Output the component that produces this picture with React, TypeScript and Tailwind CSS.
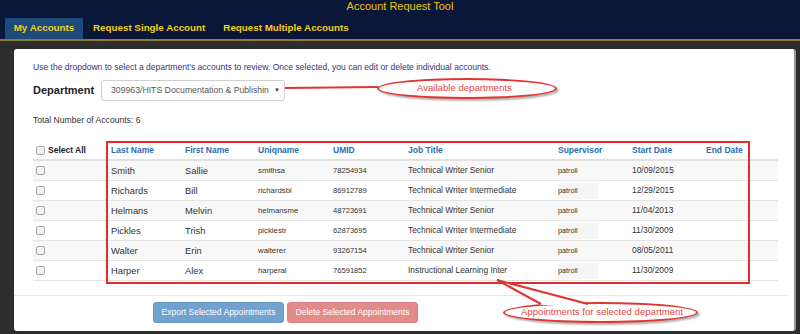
import React from 'react'

const rows = [
  { last: 'Smith', first: 'Sallie', uniq: 'smithsa', umid: '78254934', job: 'Technical Writer Senior', start: '10/09/2015' },
  { last: 'Richards', first: 'Bill', uniq: 'richardsbi', umid: '86912789', job: 'Technical Writer Intermediate', start: '12/29/2015' },
  { last: 'Helmans', first: 'Melvin', uniq: 'helmansme', umid: '48723691', job: 'Technical Writer Senior', start: '11/04/2013' },
  { last: 'Pickles', first: 'Trish', uniq: 'picklestr', umid: '62873695', job: 'Technical Writer Intermediate', start: '11/30/2009' },
  { last: 'Walter', first: 'Erin', uniq: 'walterer', umid: '93267154', job: 'Technical Writer Senior', start: '08/05/2011' },
  { last: 'Harper', first: 'Alex', uniq: 'harperal', umid: '76591852', job: 'Instructional Learning Inter', start: '11/30/2009' },
]

const cols = 'grid grid-cols-[73px_74px_73px_75px_75px_150px_74px_74px_77px]'

function Box() {
  return <span className="inline-block w-[9px] h-[9px] rounded-[2px] border border-[#a9a9a9] bg-[#f3f3f3]" />
}

export default function App() {
  return (
    <div className="relative w-[800px] h-[334px] overflow-hidden bg-[#2d2d2d] font-['Liberation_Sans',Arial,sans-serif]">
      {/* header */}
      <div className="bg-[#0b1739] h-[39px] flex flex-col">
        <div className="h-[18px] text-center text-[11px] leading-[13px] text-[#e9c800]">Account Request Tool</div>
        <div className="flex h-[21px] pl-[5px] text-[9.8px] font-bold text-[#f2cf1a] whitespace-nowrap">
          <div className="bg-[#1d4b7c] w-[78px] flex items-center justify-center">My Accounts</div>
          <div className="px-[10px] flex items-center">Request Single Account</div>
          <div className="px-[8px] flex items-center">Request Multiple Accounts</div>
        </div>
      </div>
      <div className="h-[2px] bg-[#8c7b3c]" />

      {/* panel */}
      <div className="ml-[14px] mt-[8px] w-[782px] h-[282px] bg-white rounded-[3px] border-r-2 border-[#9a9a9a]">
        <div className="pl-[19px] pt-[12px]">
          <div className="h-[12px] leading-[12px] text-[8.55px] text-[#34347f]">
            Use the dropdown to select a department's accounts to review. Once selected, you can edit or delete individual accounts.
          </div>
          <div className="mt-[7px] h-[21px] flex items-center">
            <span className="w-[68px] text-[11px] font-bold text-[#222]">Department</span>
            <div className="w-[184px] h-[21px] border border-[#cfcfcf] rounded-[3px] flex items-center pl-[9px] pr-[4px] text-[8.7px] text-[#555]">
              <span className="flex-1">309963/HITS Documentation &amp; Publishin</span>
              <span className="text-[6px] text-[#333]">▼</span>
            </div>
          </div>
          <div className="mt-[13px] h-[12px] leading-[12px] text-[8.6px] text-[#333]">Total Number of Accounts: 6</div>

          {/* table */}
          <div className="mt-[16px] w-[745px]">
            <div className={`${cols} h-[19px] items-center border-b-2 border-[#e2e2e2] text-[8.5px] font-bold text-[#2d6cb0]`}>
              <div className="pl-[3px] flex items-center gap-[3px] text-[#222]"><Box />Select All</div>
              <div className="pl-[5px]">Last Name</div>
              <div className="pl-[5px]">First Name</div>
              <div className="pl-[5px]">Uniqname</div>
              <div className="pl-[5px]">UMID</div>
              <div className="pl-[5px]">Job Title</div>
              <div className="pl-[5px]">Supervisor</div>
              <div className="pl-[5px]">Start Date</div>
              <div className="pl-[5px]">End Date</div>
            </div>
            {rows.map((r, i) => (
              <div
                key={r.uniq}
                className={`${cols} h-[20px] items-center border-b border-[#e4e4e4] text-[#333] ${i % 2 === 0 ? 'bg-[#f8f8f8]' : 'bg-white'}`}
              >
                <div className="pl-[3px] flex items-center"><Box /></div>
                <div className="pl-[5px] text-[9.4px] pt-[2px]">{r.last}</div>
                <div className="pl-[5px] text-[9.4px] pt-[2px]">{r.first}</div>
                <div className="pl-[5px] text-[7.8px]">{r.uniq}</div>
                <div className="pl-[5px] text-[7.6px]">{r.umid}</div>
                <div className="pl-[5px] text-[8.4px]">{r.job}</div>
                <div className="pl-[5px] text-[7.2px]">
                  <span className={`inline-block w-[40px] leading-[16px] ${i % 2 === 0 ? 'bg-[#f8f8f8]' : 'bg-[#f5f5f5]'}`}>patroll</span>
                </div>
                <div className="pl-[5px] text-[8.4px]">{r.start}</div>
                <div className="pl-[5px]" />
              </div>
            ))}
          </div>
        </div>

        {/* footer */}
        <div className="mt-[14px] mr-[6px] border-t border-[#e6e6e6] pt-[6px] pl-[139px] flex gap-[3px]">
          <button className="w-[131px] h-[21px] rounded-[3px] bg-[#72a2cf] border border-[#6a98c4] text-white text-[8.5px]">
            Export Selected Appointments
          </button>
          <button className="w-[131px] h-[21px] rounded-[3px] bg-[#e28c8a] border border-[#d98381] text-white text-[8.5px]">
            Delete Selected Appointments
          </button>
        </div>
      </div>

      {/* annotations */}
      <div className="absolute left-[106px] top-[141px] w-[644px] h-[143px] border-2 border-[#e42a2a]" />
      <div className="absolute left-[377px] top-[78px] w-[180px] h-[21px] rounded-[50%] border-2 border-[#e33434] bg-white shadow-[2px_2px_2px_rgba(0,0,0,0.3)] flex items-center pl-[38px] text-[9.6px] text-[#e24848]">
        Available departments
      </div>
      <div className="absolute left-[503px] top-[302px] w-[195px] h-[21px] rounded-[50%] border-2 border-[#e33434] bg-white shadow-[2px_2px_2px_rgba(0,0,0,0.3)] flex items-center pl-[16px] text-[9.6px] text-[#e24848]">
        Appointments for selected department
      </div>
      <svg className="absolute left-0 top-0" width="800" height="334">
        <line x1="285" y1="88" x2="378" y2="87" stroke="#e33434" strokeWidth="2" />
        <polygon points="541,305 497,280 588,305" fill="#fff" />
        <polyline points="541,304 497,280 588,304" fill="none" stroke="#e33434" strokeWidth="2" />
      </svg>
    </div>
  )
}
